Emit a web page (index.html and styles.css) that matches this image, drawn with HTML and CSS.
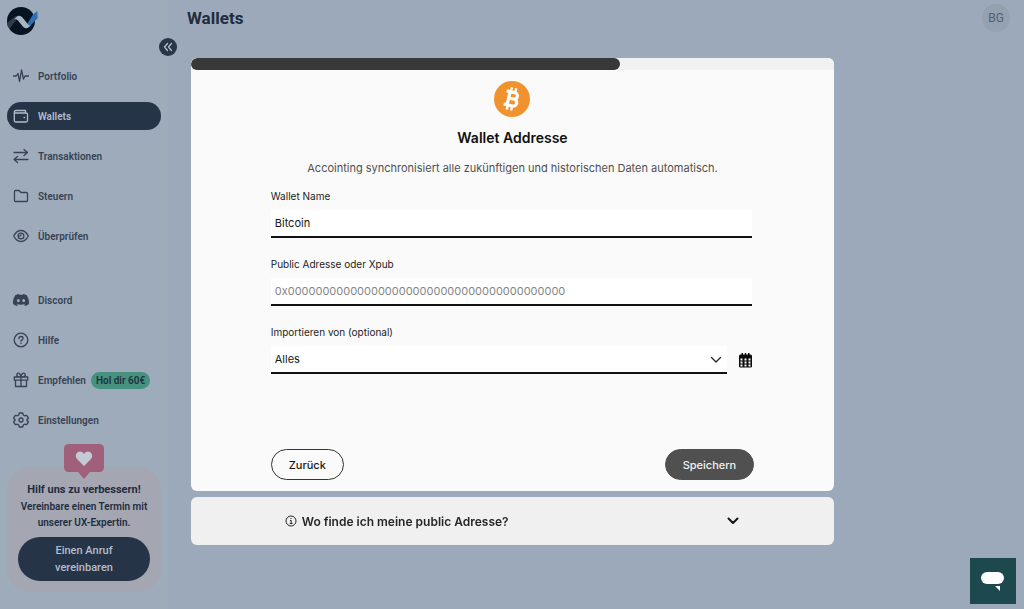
FILE: index.html
```html
<!DOCTYPE html>
<html lang="de">
<head>
<meta charset="utf-8">
<meta name="viewport" content="width=device-width, initial-scale=1">
<title>Wallets</title>
<link rel="stylesheet" href="styles.css">
</head>
<body>
<div class="app">
  <aside class="sidebar">
    <a class="logo" href="#" aria-label="Accointing">
      <svg width="32" height="30" viewBox="0 0 32 30">
        <circle cx="14" cy="15" r="14" fill="#061321"/>
        <path d="M0 17 8 10.500q2-1.500 4 .5L6 18 2.500 23Q0 20 0 17z" fill="#303c4a"/>
        <path d="M19.500 19 26 8.500 30.500 5v7.500L23 20z" fill="#2f70b2"/>
        <path d="M7 13.500 9.500 11q3-2.500 6 .5l6 7.500q1.500 1 3-.5-3.500 4.500-6.500 3.500-1.500-.5-3-2.500l-4-5q-2-2.500-4-1z" fill="#a9b5c2"/>
      </svg>
    </a>
    <button class="collapse" type="button" aria-label="Menü einklappen">
      <svg width="10" height="10" viewBox="0 0 10 10" class="line"><path d="M4.500 1.500 1.500 5l3 3.500M8.500 1.500 5.500 5l3 3.500"/></svg>
    </button>
    <nav class="nav">
      <a class="item" href="#"><svg class="line" width="16" height="16" viewBox="0 0 16 16"><path d="M.5 8h2.800L5 5.500l1.500 8L8.500 2l2 9L12 8h3.500"/></svg>Portfolio</a>
      <a class="item active" href="#"><svg class="line" width="16" height="16" viewBox="0 0 16 16"><path d="M3 2.500h9.500v2M3 2.500c-2.300 0-2.300 2.500 0 2.500h10q1.500 0 1.500 1.500v6q0 1.500-1.500 1.500H3q-1.700 0-1.700-1.500V4M11 9.500h.6"/></svg>Wallets</a>
      <a class="item" href="#"><svg class="line" width="16" height="16" viewBox="0 0 16 16"><path d="M1 4.500h13M11 1.500l3.500 3-3.500 3M15 11.500H1.500M4.500 8.500l-3.500 3 3.500 3"/></svg>Transaktionen</a>
      <a class="item" href="#"><svg class="line" width="16" height="16" viewBox="0 0 16 16"><path d="M1.500 12.500v-9q0-1 1-1h3.600l1.900 2h5.500q1 0 1 1v7q0 1-1 1h-11q-1 0-1-1z"/></svg>Steuern</a>
      <a class="item" href="#"><svg class="line" width="16" height="16" viewBox="0 0 16 16"><path d="M.7 8Q3.500 2.500 8 2.500T15.300 8Q12.500 13.500 8 13.500T.7 8z"/><circle cx="8" cy="8" r="2.900"/><path d="M8 6.800q-.2 1.200-1.400 1.300"/></svg>Überprüfen</a>
    </nav>
    <nav class="nav nav-more">
      <a class="item" href="#"><svg width="16" height="16" viewBox="0 0 24 24"><path fill="currentColor" fill-rule="evenodd" d="M20.300 4.400A20 20 0 0 0 15.400 2.900l-.7 1.300a18 18 0 0 0-5.400 0L8.600 2.900a20 20 0 0 0-4.900 1.500C.5 9-.3 13.600.1 18.100a20 20 0 0 0 6 3l1.300-2-2-1 .5-.4a14 14 0 0 0 12.200 0l.5.400-2 1 1.300 2a20 20 0 0 0 6-3c.5-5.200-.8-9.700-3.600-13.700zM8 15.300c-1.200 0-2.200-1.100-2.200-2.400S6.800 10.500 8 10.500s2.200 1.100 2.200 2.400-1 2.400-2.200 2.400zm8 0c-1.200 0-2.200-1.100-2.200-2.400s1-2.400 2.200-2.400 2.200 1.100 2.200 2.400-1 2.400-2.200 2.400z"/></svg>Discord</a>
      <a class="item" href="#"><svg class="line" width="16" height="16" viewBox="0 0 16 16"><circle cx="8" cy="8" r="6.800"/><path d="M6 6.500q0-2 2-2t2 1.700T8 8.700v.5M8 11.200v.3"/></svg>Hilfe</a>
      <a class="item" href="#"><svg class="line" width="16" height="16" viewBox="0 0 16 16"><path d="M1.300 5h13.400v3.200H1.300zM2.500 8.200v6.300h11V8.200M8 5v9.500M8 5Q4 5.200 3.700 3 4 .7 5.800 1.200 7.700 2 8 5q.3-3 2.200-3.800Q12 .7 12.300 3 12 5.200 8 5"/></svg><span>Empfehlen</span><span class="tag">Hol dir 60€</span></a>
      <a class="item" href="#"><svg class="line" width="16" height="16" viewBox="0 0 16 16"><path d="M6.300 1h3.400l.6 2 1.400.8 2-.5 1.700 2.900-1.500 1.500v.6l1.500 1.500-1.700 2.900-2-.5-1.400.8-.6 2H6.300l-.6-2-1.400-.8-2 .5L.6 9.800l1.500-1.500v-.6L.6 6.200l1.700-2.900 2 .5L5.700 3z"/><circle cx="8" cy="8" r="2"/></svg>Einstellungen</a>
    </nav>
    <section class="promo">
      <svg class="promo-badge" width="40" height="35" viewBox="0 0 40 35"><path d="M5 0h30q5 0 5 5v18q0 5-5 5h-9l-6 7-6-7H5q-5 0-5-5V5q0-5 5-5z" fill="#a0607b"/><path d="M20 22l-7-7c-4-5 3-11 7-5 4-6 11 0 7 5z" fill="#c3cad3"/></svg>
      <h2 class="promo-title">Hilf uns zu verbessern!</h2>
      <p class="promo-text">Vereinbare einen Termin mit unserer UX-Expertin.</p>
      <button class="promo-button" type="button">Einen Anruf vereinbaren</button>
    </section>
  </aside>
  <header class="topbar">
    <h1 class="page-title">Wallets</h1>
    <button class="avatar" type="button">BG</button>
  </header>
</div>

<div class="overlay">
  <div class="dialog" role="dialog" aria-modal="true" aria-labelledby="dialog-title">
    <section class="card">
      <div class="progress" role="progressbar" aria-label="Fortschritt" aria-valuemin="0" aria-valuemax="3" aria-valuenow="2"><div class="progress-bar"></div></div>
      <form class="form">
        <svg class="coin" width="36" height="36" viewBox="0 0 36 36"><circle cx="18" cy="18" r="18" fill="#f0932f"/>
          <g transform="rotate(13 18 18)" fill="none" stroke="#fff"><path d="M14.500 11v14M11 11.300h8.500a3.200 3.200 0 0 1 0 6.400h-5M20 17.700a3.500 3.500 0 0 1 0 7h-9" stroke-width="3.200"/><path d="M15.300 6.500v4.500M19.700 6.500v4.500M15.300 25v4.500M19.700 25v4.500" stroke-width="2.400"/></g></svg>
        <h2 class="form-title" id="dialog-title">Wallet Addresse</h2>
        <p class="form-text">Accointing synchronisiert alle zukünftigen und historischen Daten automatisch.</p>
        <div class="field">
          <label for="wallet-name">Wallet Name</label>
          <input class="control" id="wallet-name" type="text" value="Bitcoin">
        </div>
        <div class="field">
          <label for="address">Public Adresse oder Xpub</label>
          <input class="control" id="address" type="text" placeholder="0x0000000000000000000000000000000000000000">
        </div>
        <div class="field">
          <label for="import-from">Importieren von (optional)</label>
          <div class="import-row">
            <div class="select-box">
              <select class="control" id="import-from"><option>Alles</option></select>
              <svg class="select-arrow line" width="12" height="8" viewBox="0 0 12 8"><path d="M1.500 1.500 6 6l4.500-4.500"/></svg>
            </div>
            <button class="calendar" type="button" aria-label="Datum wählen">
              <svg width="13" height="15" viewBox="0 0 13 15"><path fill="#0c0c0c" fill-rule="evenodd" d="M2.500 0H4v1.500h1.800V0h1.400v1.500H9V0h1.500v1.500h1Q13 1.500 13 3v10.500q0 1-1.500 1h-10Q0 14.500 0 13.500V3q0-1.500 1.500-1.500h1zM1.500 5.500v2h2v-2zm4 0v2h2v-2zm4 0v2h2v-2zm-8 3v2h2v-2zm4 0v2h2v-2zm4 0v2h2v-2zm-8 3v2h2v-2zm4 0v2h2v-2zm4 0v2h2v-2z"/></svg>
            </button>
          </div>
        </div>
        <div class="actions">
          <button class="button" type="button">Zurück</button>
          <button class="button primary" type="submit">Speichern</button>
        </div>
      </form>
    </section>
    <button class="faq" type="button" aria-expanded="false">
      <svg class="faq-info" width="12" height="12" viewBox="0 0 12 12"><circle cx="6" cy="6" r="5"/><path d="M5 5.500h1.200v3M4.700 8.500h2.800M6 3v1"/></svg>
      <span>Wo finde ich meine public Adresse?</span>
      <svg class="faq-arrow" width="12" height="8" viewBox="0 0 12 8"><path d="M1.500 1.500 6 6l4.500-4.500"/></svg>
    </button>
  </div>
</div>
<button class="chat" type="button" aria-label="Chat öffnen">
  <svg width="24" height="20" viewBox="0 0 24 20" fill="#fff"><rect x="0" y="1" width="23" height="12" rx="6"/><path d="M14 15h5v5z"/></svg>
</button>
</body>
</html>
```

FILE: styles.css
```css
* { box-sizing: border-box; }
body {
  margin: 0;
  background: #9ca9ba;
  color: #212d3d;
  font-family: Roboto, sans-serif;
}
h1, h2, p { margin: 0; }
button { font: inherit; border: 0; padding: 0; cursor: pointer; }
svg { flex: none; }
.line { fill: none; stroke: currentColor; stroke-width: 1.3; stroke-linecap: round; stroke-linejoin: round; }

.app { display: flex; min-height: 100vh; }
.sidebar {
  position: relative;
  width: 168px;
  flex: none;
  padding: 6px 7px 18px;
  background: #9eabbb;
}
.logo { display: block; height: 30px; }
.collapse {
  position: absolute;
  top: 38px;
  right: -9px;
  display: grid;
  place-items: center;
  width: 18px;
  height: 18px;
  border-radius: 50%;
  background: #293648;
  color: #b4bfcc;
}
.nav { display: grid; gap: 12px; padding-top: 26px; }
.nav-more { padding-top: 36px; }
.item {
  display: flex;
  align-items: center;
  height: 28px;
  padding-left: 6px;
  border-radius: 14px;
  color: #374354;
  font-size: 10px;
  font-weight: 600;
  text-decoration: none;
}
.item svg { margin-right: 9px; }
.item.active { background: #263447; color: #b2bdcb; }
.tag {
  margin-left: 5px;
  padding: 0 5px;
  border-radius: 9px;
  background: #47917f;
  color: #1d3340;
  font-size: 10px;
  line-height: 17px;
}
.promo {
  position: relative;
  margin-top: 33px;
  padding: 14px 11px 11px;
  border-radius: 24px;
  background: #a4a6b2;
  text-align: center;
}
.promo-badge { position: absolute; top: -23px; left: 57px; }
.promo-title { font-size: 11px; line-height: 18px; font-weight: 700; }
.promo-text { margin-bottom: 6px; font-size: 10px; line-height: 16px; font-weight: 600; }
.promo-button {
  width: 100%;
  padding: 5px 32px;
  border-radius: 22px;
  background: #263447;
  color: #b2bdcb;
  font-size: 11px;
  line-height: 17px;
  font-weight: 500;
}

.topbar {
  display: flex;
  flex: 1;
  align-items: flex-start;
  justify-content: space-between;
  padding: 4px 14px 0 19px;
}
.page-title { font-size: 17px; line-height: 28px; font-weight: 700; }
.avatar {
  width: 28px;
  height: 28px;
  border-radius: 50%;
  background: #94a1b1;
  color: #536072;
  font-size: 12px;
}

.overlay {
  position: fixed;
  inset: 0;
  display: flex;
  align-items: center;
  justify-content: center;
  padding: 0 0 6px 1px;
  font-family: Inter, sans-serif;
}
.dialog { display: grid; gap: 6px; width: 62.9%; }
.card { overflow: hidden; border-radius: 6px; background: #fafafa; }
.progress { height: 12px; background: #f1f1f1; }
.progress-bar { width: 66.67%; height: 100%; border-radius: 6px; background: #383838; }
.form { display: flex; flex-direction: column; padding: 11px 80px; }
.coin { align-self: center; }
.form-title {
  margin-top: 11px;
  color: #111;
  font-size: 14px;
  line-height: 20px;
  font-weight: 600;
  text-align: center;
}
.form-text {
  margin: 10px 0;
  color: #505050;
  font-size: 11px;
  line-height: 20px;
  text-align: center;
}
.field { display: grid; gap: 6px; margin: 0 2px 18px 0; }
.field label { color: #1c1c1c; font-size: 10px; line-height: 16px; }
.control {
  width: 100%;
  height: 28px;
  padding: 0 4px;
  border: 0;
  border-bottom: 2px solid #111;
  border-radius: 0;
  outline: 0;
  background: #fff;
  color: #161616;
  font: 11px Inter, sans-serif;
  appearance: none;
}
.control::placeholder { color: #858585; opacity: 1; }
.import-row { display: flex; align-items: center; gap: 12px; }
.select-box { position: relative; flex: 1; }
.select-box .control { display: block; }
.select-arrow { position: absolute; top: 10px; right: 5px; color: #222; pointer-events: none; }
.calendar { display: flex; background: none; }
.actions { display: flex; justify-content: space-between; margin-top: 57px; }
.button {
  height: 31px;
  padding: 0 17px;
  border: 1px solid #333;
  border-radius: 16px;
  background: #fafafa;
  color: #181818;
  font-size: 11px;
  font-weight: 500;
}
.button.primary { border-color: #505050; background: #505050; color: #f1f1f1; }
.faq {
  display: flex;
  align-items: center;
  gap: 5px;
  height: 48px;
  padding: 0 95px 0 94px;
  border-radius: 6px;
  background: #f0f0f0;
  color: #262626;
  font-size: 12px;
  font-weight: 600;
}
.faq-info { fill: none; stroke: #262626; stroke-width: 1; }
.faq-arrow { margin-left: auto; fill: none; stroke: #161616; stroke-width: 2; stroke-linecap: round; stroke-linejoin: round; }
.chat {
  position: fixed;
  right: 8px;
  bottom: 5px;
  display: grid;
  place-items: center;
  width: 46px;
  height: 46px;
  background: #1d494e;
}
```
